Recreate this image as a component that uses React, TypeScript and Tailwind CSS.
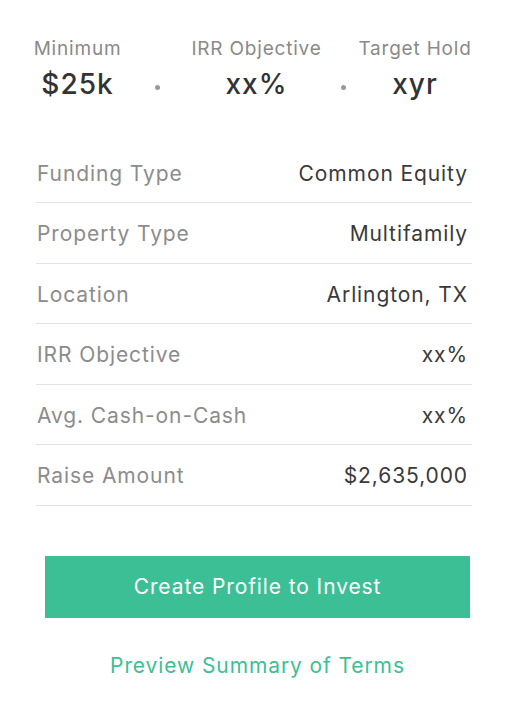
const rows: [string, string][] = [
  ['Funding Type', 'Common Equity'],
  ['Property Type', 'Multifamily'],
  ['Location', 'Arlington, TX'],
  ['IRR Objective', 'xx%'],
  ['Avg. Cash-on-Cash', 'xx%'],
  ['Raise Amount', '$2,635,000'],
];

function Stat({ label, value, w }: { label: string; value: string; w: string }) {
  return (
    <div className={`flex flex-col items-center ${w}`}>
      <div className="text-[19px] leading-[24px] tracking-[0.8px] text-[#8a8a8a] whitespace-nowrap">{label}</div>
      <div className="mt-[6px] text-[28px] leading-[34px] tracking-[1px] font-medium text-[#333] whitespace-nowrap">{value}</div>
    </div>
  );
}

function Dot() {
  return <div className="mt-[48px] h-[5px] w-[5px] rounded-full bg-[#9a9a9a]" />;
}

export default function App() {
  return (
    <div className="min-h-[717px] w-[510px] bg-white" style={{ fontFamily: 'Inter, sans-serif' }}>
      <div className="flex items-start pt-[37px] pl-[34px]">
        <Stat label="Minimum" value="$25k" w="w-[87px]" />
        <div className="ml-[34px]"><Dot /></div>
        <div className="ml-[32px]"><Stat label="IRR Objective" value="xx%" w="w-[129px]" /></div>
        <div className="ml-[20px]"><Dot /></div>
        <div className="ml-[13px]"><Stat label="Target Hold" value="xyr" w="w-[112px]" /></div>
      </div>

      <div className="mt-[42px] ml-[36px] w-[436px]">
        {rows.map(([k, v], i) => (
          <div
            key={k}
            className={`flex items-center justify-between border-b border-[#e2e2e2] pt-[17px] pl-[1px] pr-[4px] text-[21px] leading-[28px] tracking-[0.9px] ${i % 2 === 1 ? 'pb-[15px]' : 'pb-[14px]'}`}
          >
            <span className="text-[#8c8c8c]">{k}</span>
            <span className="text-[#3a3a3a]">{v}</span>
          </div>
        ))}
      </div>

      <div className="mt-[50px] ml-[45px] w-[425px]">
        <button className="flex h-[62px] w-full items-center justify-center bg-[#3cbf94] text-[21px] leading-[28px] tracking-[0.9px] text-white">
          Create Profile to Invest
        </button>
        <div className="mt-[34px] text-center text-[21px] leading-[28px] tracking-[0.9px] text-[#3cbf94]">
          Preview Summary of Terms
        </div>
      </div>
    </div>
  );
}
